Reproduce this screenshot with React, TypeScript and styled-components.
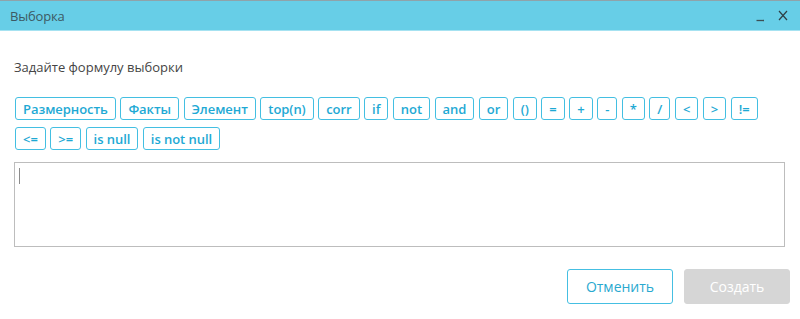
import React from "react";
import styled, { createGlobalStyle } from "styled-components";

const Global = createGlobalStyle`
  html, body { margin: 0; padding: 0; background: #ffffff; }
  body { font-family: "Open Sans", "Noto Sans", sans-serif; }
  * { box-sizing: border-box; }
`;

const Dialog = styled.div`
  width: 800px;
  height: 319px;
  display: flex;
  flex-direction: column;
  background: #ffffff;
`;

const TitleBar = styled.div`
  height: 31px;
  display: flex;
  align-items: center;
  justify-content: space-between;
  background: #67cee7;
  border-top: 1px solid #8fa3aa;
  border-bottom: 1px solid #a6e2f1;
  padding: 0 10px 0 10px;
`;

const Title = styled.span`
  font-size: 13px;
  color: #3c5963;
  letter-spacing: -0.2px;
`;

const WindowControls = styled.div`
  display: flex;
  align-items: center;
  gap: 13px;
  padding-right: 2px;
`;

const Body = styled.div`
  display: flex;
  flex-direction: column;
  padding: 0 15px 0 14px;
`;

const Label = styled.div`
  margin-top: 27px;
  font-size: 13px;
  line-height: 18px;
  color: #454545;
`;

const Tokens = styled.div`
  margin-top: 21px;
  display: flex;
  flex-wrap: wrap;
  column-gap: 4.5px;
  row-gap: 7px;
  padding-left: 1px;
  width: 760px;
`;

const Token = styled.button`
  height: 23px;
  padding: 0 7px;
  border: 1px solid #43bfe2;
  border-radius: 3px;
  background: #ffffff;
  color: #1ea9d4;
  font-family: "Open Sans", sans-serif;
  font-weight: 600;
  font-size: 13px;
  line-height: 20px;
  letter-spacing: -0.05px;
  cursor: pointer;
`;

const Formula = styled.div`
  margin-top: 12px;
  width: 771px;
  height: 85px;
  border: 1px solid #bdbdbd;
  padding: 5px 4px;
`;

const Caret = styled.div`
  width: 1px;
  height: 16px;
  background: #8c8c8c;
`;

const Footer = styled.div`
  margin-top: 22px;
  display: flex;
  justify-content: flex-end;
  gap: 11px;
  padding-right: 10px;
`;

const FooterButton = styled.button<{ $primary?: boolean }>`
  width: 106px;
  height: 35px;
  border-radius: 3px;
  font-family: "Open Sans", sans-serif;
  font-size: 14px;
  border: 1px solid ${(p) => (p.$primary ? "#d6d6d6" : "#45bfe2")};
  background: ${(p) => (p.$primary ? "#d6d6d6" : "#ffffff")};
  color: ${(p) => (p.$primary ? "#ffffff" : "#2aa9cf")};
`;

const tokens = [
  "Размерность", "Факты", "Элемент", "top(n)", "corr", "if", "not", "and", "or",
  "()", "=", "+", "-", "*", "/", "<", ">", "!=", "<=", ">=", "is null", "is not null",
];

export default function App() {
  return (
    <>
      <Global />
      <Dialog>
        <TitleBar>
          <Title>Выборка</Title>
          <WindowControls>
            <svg width="9" height="12" viewBox="0 0 9 12">
              <line x1="0.5" y1="10.5" x2="8" y2="10.5" stroke="#3d4f55" strokeWidth="1.3" />
            </svg>
            <svg width="10" height="11" viewBox="0 0 10 11">
              <path d="M1 1 L9 10 M9 1 L1 10" stroke="#2f4046" strokeWidth="1.2" fill="none" />
            </svg>
          </WindowControls>
        </TitleBar>
        <Body>
          <Label>Задайте формулу выборки</Label>
          <Tokens>
            {tokens.map((t) => (
              <Token key={t}>{t}</Token>
            ))}
          </Tokens>
          <Formula>
            <Caret />
          </Formula>
        </Body>
        <Footer>
          <FooterButton>Отменить</FooterButton>
          <FooterButton $primary>Создать</FooterButton>
        </Footer>
      </Dialog>
    </>
  );
}
